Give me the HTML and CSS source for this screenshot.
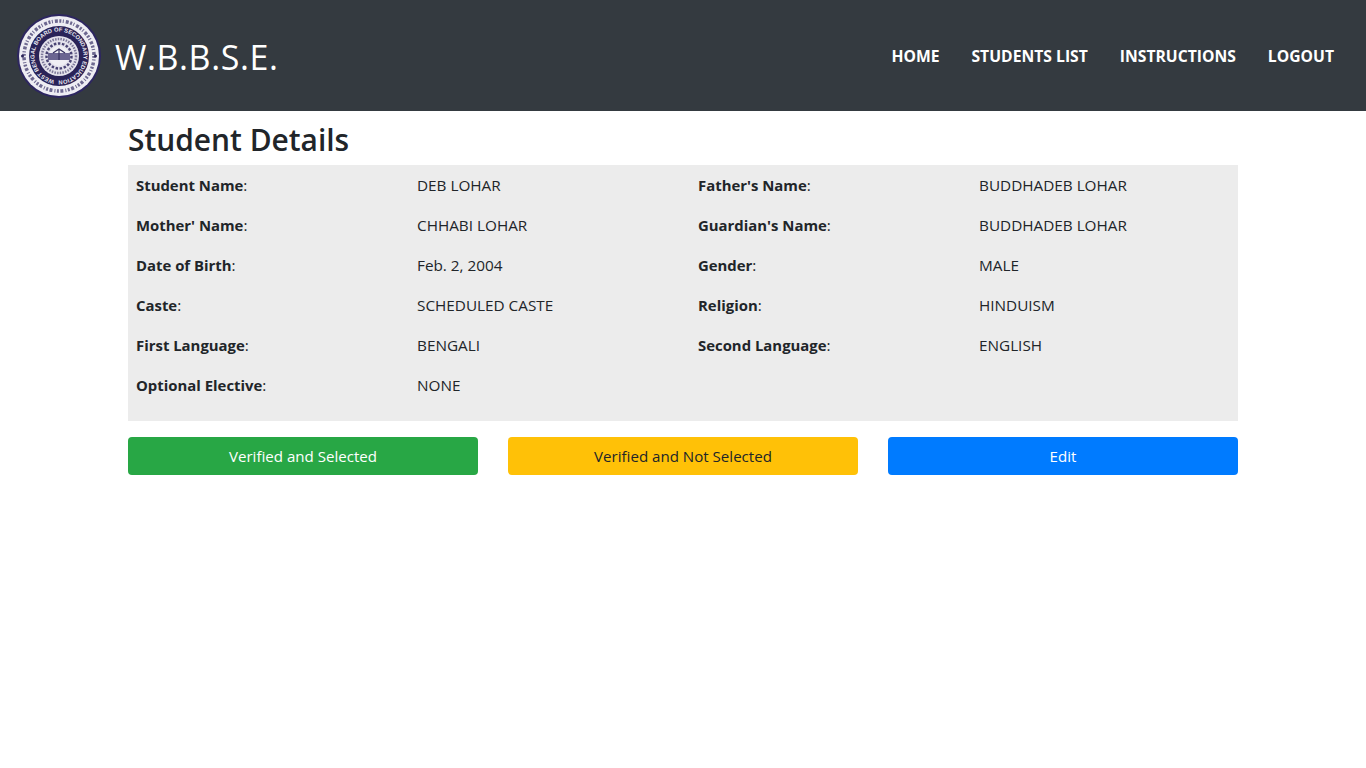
FILE: index.html
```html
<!DOCTYPE html>
<html lang="en">
<head>
    <meta charset="UTF-8">
    <meta name="viewport" content="width=device-width, initial-scale=1.0">
    <title>Student Details</title>
    <link rel="stylesheet" href="styles.css">
</head>
<body>
    <nav class="navbar">
        <a class="brand" href="#">
            <svg class="logo" viewBox="0 0 84 84" width="84" height="84">
                <defs>
                    <path id="ring" d="M42 66.500 a24.500 24.500 0 1 1 0.010 0"></path>
                </defs>
                <circle cx="42" cy="42" r="42" fill="#2d2660"></circle>
                <circle cx="42" cy="42" r="40" fill="#eeedf3"></circle>
                <!-- outer lettering of the seal, too small to read -->
                <circle cx="42" cy="42" r="35" fill="none" stroke="#6d6890" stroke-width="3.500" stroke-dasharray="2 1.500 1 2 3 1.500"></circle>
                <circle cx="42" cy="42" r="30" fill="#2a2358"></circle>
                <circle cx="42" cy="42" r="20" fill="#e4e2ec"></circle>
                <circle cx="42" cy="42" r="17" fill="none" stroke="#7d7899" stroke-width="2.500" stroke-dasharray="1.500 1.200"></circle>
                <circle cx="42" cy="42" r="12.500" fill="none" stroke="#4a4474" stroke-width="2.500" stroke-dasharray="2.500 1.600"></circle>
                <circle cx="42" cy="42" r="10" fill="#f0eff4"></circle>
                <rect x="31" y="39" width="22" height="7" fill="#6b6591"></rect>
                <path d="M36 39 l6 -4 l6 4 M42 35 v11" fill="none" stroke="#35305f" stroke-width="1.2"></path>
                <circle cx="5.500" cy="42" r="1.500" fill="#2a2358"></circle>
                <circle cx="78.500" cy="42" r="1.500" fill="#2a2358"></circle>
                <text class="logo-ring"><textPath href="#ring" startOffset="3%">WEST BENGAL BOARD OF SECONDARY EDUCATION</textPath></text>
            </svg>
            <span class="brand-name">W.B.B.S.E.</span>
        </a>
        <ul class="nav-links">
            <li><a href="#">HOME</a></li>
            <li><a href="#">STUDENTS LIST</a></li>
            <li><a href="#">INSTRUCTIONS</a></li>
            <li><a href="#">LOGOUT</a></li>
        </ul>
    </nav>

    <div class="container">
        <h2>Student Details</h2>
        <div class="details">
            <div><b>Student Name</b>:</div>
            <div>DEB LOHAR</div>
            <div><b>Father's Name</b>:</div>
            <div>BUDDHADEB LOHAR</div>

            <div><b>Mother' Name</b>:</div>
            <div>CHHABI LOHAR</div>
            <div><b>Guardian's Name</b>:</div>
            <div>BUDDHADEB LOHAR</div>

            <div><b>Date of Birth</b>:</div>
            <div>Feb. 2, 2004</div>
            <div><b>Gender</b>:</div>
            <div>MALE</div>

            <div><b>Caste</b>:</div>
            <div>SCHEDULED CASTE</div>
            <div><b>Religion</b>:</div>
            <div>HINDUISM</div>

            <div><b>First Language</b>:</div>
            <div>BENGALI</div>
            <div><b>Second Language</b>:</div>
            <div>ENGLISH</div>

            <div><b>Optional Elective</b>:</div>
            <div>NONE</div>
        </div>
        <div class="actions">
            <a class="btn btn-success" href="#">Verified and Selected</a>
            <a class="btn btn-warning" href="#">Verified and Not Selected</a>
            <a class="btn btn-primary" href="#">Edit</a>
        </div>
    </div>
</body>
</html>
```

FILE: styles.css
```css
* {
    box-sizing: border-box;
}

body {
    margin: 0;
    background: #fff;
    color: #212529;
    font-family: "Open Sans", "Noto Sans", sans-serif;
    font-size: 15.3px;
    line-height: 24px;
}

a {
    text-decoration: none;
}

.navbar {
    display: flex;
    justify-content: space-between;
    align-items: center;
    height: 111px;
    padding: 0 32px 0 17px;
    background-color: #343a40;
}

.brand {
    display: flex;
    align-items: center;
    color: #fff;
}

.logo {
    display: block;
    margin-right: 14px;
}

.logo-ring {
    font-family: "Liberation Sans", sans-serif;
    font-size: 5.8px;
    font-weight: bold;
    fill: #ecebf3;
}

.brand-name {
    padding-top: 2px;
    font-size: 34px;
    line-height: 40px;
    letter-spacing: 0.6px;
}

.nav-links {
    display: flex;
    gap: 32px;
    margin: 0;
    padding: 0;
    list-style: none;
}

.nav-links a {
    color: #fff;
    font-size: 15.7px;
    font-weight: 700;
}

.container {
    width: 1110px;
    margin: 0 auto;
}

h2 {
    margin: 9px 0 5px;
    font-size: 29.9px;
    font-weight: 600;
    line-height: 40px;
}

.details {
    display: grid;
    grid-template-columns: repeat(4, 281px);
    grid-auto-rows: 40px;
    height: 256px;
    padding-left: 8px;
    background-color: #ececec;
}

.details div {
    padding-top: 8px;
    white-space: nowrap;
}

.details b {
    font-size: 14.9px;
}

.actions {
    display: flex;
    gap: 30px;
    margin-top: 16px;
}

.btn {
    flex: 1;
    height: 38px;
    border-radius: 4px;
    font-size: 15.1px;
    line-height: 38px;
    text-align: center;
}

.btn-success {
    background-color: #28a745;
    color: #fff;
}

.btn-warning {
    background-color: #ffc107;
    color: #212529;
}

.btn-primary {
    background-color: #007bff;
    color: #fff;
}
```
